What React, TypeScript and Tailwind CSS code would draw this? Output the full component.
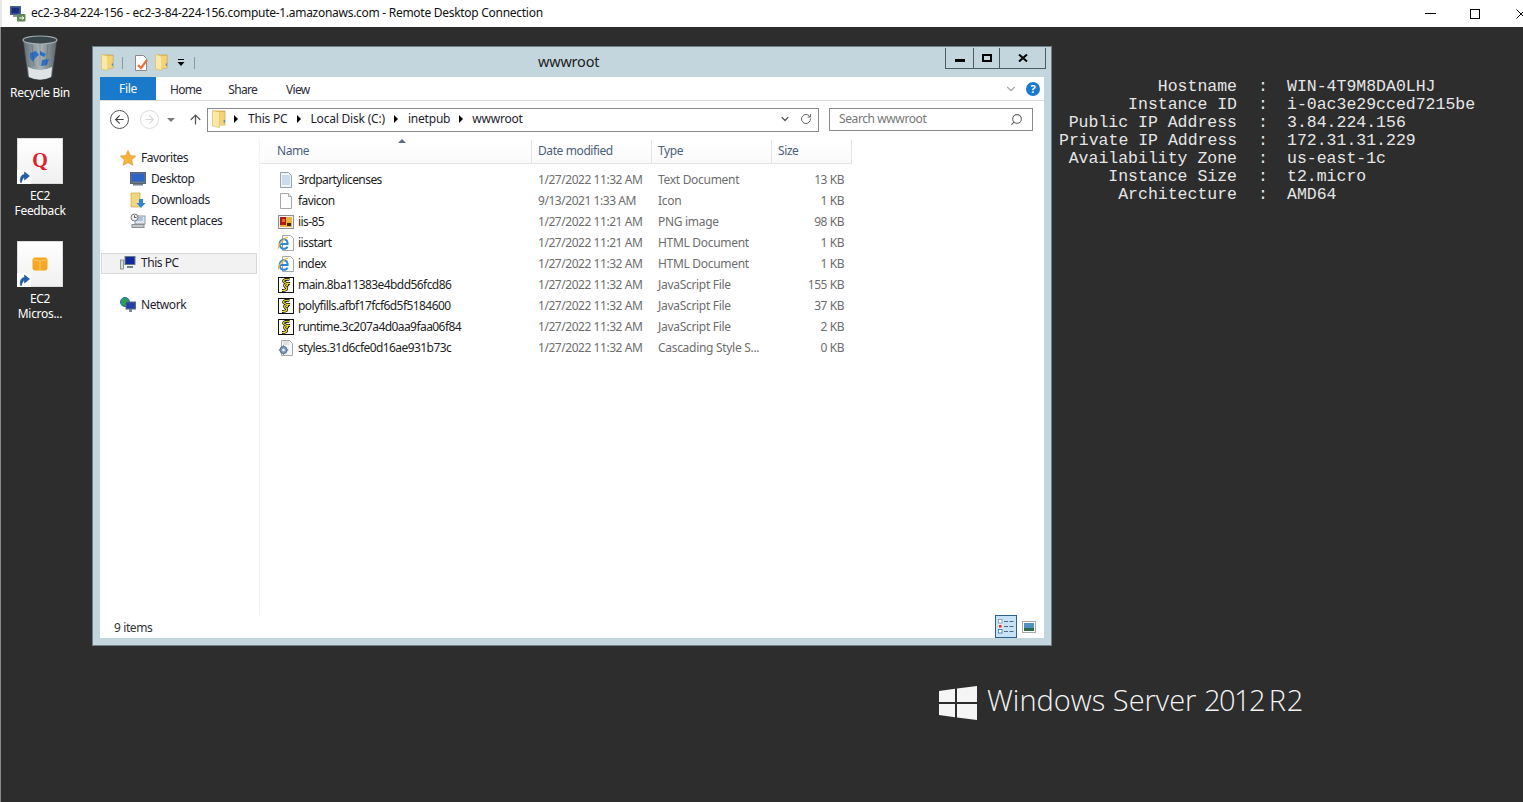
import { ArrowLeft, ArrowRight, ArrowUp, ChevronDown, RotateCw, Search } from 'lucide-react';
import type { ReactNode } from 'react';

type FileKind = 'text' | 'blank' | 'png' | 'ie' | 'js' | 'css';

interface FileRow {
  name: string;
  date: string;
  type: string;
  size: string;
  kind: FileKind;
}

const files: FileRow[] = [
  { name: '3rdpartylicenses', date: '1/27/2022 11:32 AM', type: 'Text Document', size: '13 KB', kind: 'text' },
  { name: 'favicon', date: '9/13/2021 1:33 AM', type: 'Icon', size: '1 KB', kind: 'blank' },
  { name: 'iis-85', date: '1/27/2022 11:21 AM', type: 'PNG image', size: '98 KB', kind: 'png' },
  { name: 'iisstart', date: '1/27/2022 11:21 AM', type: 'HTML Document', size: '1 KB', kind: 'ie' },
  { name: 'index', date: '1/27/2022 11:32 AM', type: 'HTML Document', size: '1 KB', kind: 'ie' },
  { name: 'main.8ba11383e4bdd56fcd86', date: '1/27/2022 11:32 AM', type: 'JavaScript File', size: '155 KB', kind: 'js' },
  { name: 'polyfills.afbf17fcf6d5f5184600', date: '1/27/2022 11:32 AM', type: 'JavaScript File', size: '37 KB', kind: 'js' },
  { name: 'runtime.3c207a4d0aa9faa06f84', date: '1/27/2022 11:32 AM', type: 'JavaScript File', size: '2 KB', kind: 'js' },
  { name: 'styles.31d6cfe0d16ae931b73c', date: '1/27/2022 11:32 AM', type: 'Cascading Style S...', size: '0 KB', kind: 'css' },
];

const instanceInfo = [
  ['Hostname', 'WIN-4T9M8DA0LHJ'],
  ['Instance ID', 'i-0ac3e29cced7215be'],
  ['Public IP Address', '3.84.224.156'],
  ['Private IP Address', '172.31.31.229'],
  ['Availability Zone', 'us-east-1c'],
  ['Instance Size', 't2.micro'],
  ['Architecture', 'AMD64'],
];

function FolderIcon({ className = 'w-[14px] h-[18px]' }: { className?: string }) {
  return (
    <svg viewBox="0 0 14 18" className={className}>
      <path d="M2 1h11v14H2z" fill="#edc45c" stroke="#c99b35" strokeWidth="0.7" />
      <path d="M0.5 0.5l7 1.5v15.5l-7-1.5z" fill="#f9e9a4" stroke="#dcbb62" strokeWidth="0.7" />
      <path d="M7.5 2h5v13h-5z" fill="#f4d27a" />
      <rect x="11.6" y="10" width="1.4" height="2.5" fill="#4a90d9" />
    </svg>
  );
}

function RdpIcon() {
  return (
    <svg viewBox="0 0 16 16" className="w-[16px] h-[16px]">
      <rect x="0.5" y="0.5" width="10" height="8" fill="#2a4fa8" stroke="#566" />
      <rect x="2" y="2" width="7" height="5" fill="#1a2f7c" />
      <rect x="3" y="9" width="5" height="2" fill="#8a96a8" />
      <rect x="7" y="8" width="8.5" height="7.5" rx="1" fill="#5f8a55" />
      <path d="M9 12h5M12 10.5l2 1.5-2 1.5" stroke="#fff" strokeWidth="1" fill="none" />
    </svg>
  );
}

function RecycleBinIcon() {
  return (
    <svg viewBox="0 0 36 46" className="w-[36px] h-[46px]">
      <defs>
        <linearGradient id="binBody" x1="0" x2="1" y1="0" y2="0">
          <stop offset="0" stopColor="#5f6c72" />
          <stop offset="0.5" stopColor="#a9b4b8" />
          <stop offset="1" stopColor="#59666c" />
        </linearGradient>
      </defs>
      <path d="M1 5l5 37q12 6 24 0l5-37z" fill="url(#binBody)" stroke="#333b40" strokeWidth="0.6" />
      <path d="M6 32q12 6 24 0l-1 10q-11 5-22 0z" fill="#dfe3e5" />
      <ellipse cx="18" cy="5" rx="17" ry="4" fill="#39454b" stroke="#a3adb2" strokeWidth="1.2" />
      <path d="M8 18l6-2 3 4-4 3-2 4-3-4zM18 16l6 3-2 3-4-2zM20 25l7-1-2 6-6 1z" fill="#2f6fc4" />
      <path d="M10 9l2 22M26 9l-2 22M18 9v22" stroke="#2f3a40" strokeWidth="0.5" opacity="0.5" />
    </svg>
  );
}

function ShortcutBadge() {
  return (
    <span className="absolute -left-px -bottom-px w-[14px] h-[14px] bg-white flex items-center justify-center">
      <svg viewBox="0 0 12 12" className="w-[12px] h-[12px]">
        <path d="M2.5 11.5C1.5 6 4 3.5 6.5 3.5V1L11.5 5 6.5 9V6.5C5 6.5 4 8.5 3.5 11.5z" fill="#1f5fae" stroke="#123f7c" strokeWidth="0.5" />
      </svg>
    </span>
  );
}

function DesktopTile({ children }: { children: ReactNode }) {
  return (
    <div className="relative w-[46px] h-[46px] bg-gradient-to-b from-white to-[#f0f0f0] border border-[#dcdcdc] flex items-center justify-center">
      {children}
      <ShortcutBadge />
    </div>
  );
}

function FileIcon({ kind }: { kind: FileKind }) {
  if (kind === 'text') {
    return (
      <svg viewBox="0 0 16 16" className="w-[16px] h-[16px]">
        <path d="M2.5 0.5h8l3 3v12h-11z" fill="#eef5fb" stroke="#9aa4ac" />
        <path d="M4 4h8M4 6h8M4 8h8M4 10h8M4 12h8" stroke="#a8c4dc" strokeWidth="1" />
      </svg>
    );
  }
  if (kind === 'blank') {
    return (
      <svg viewBox="0 0 16 16" className="w-[16px] h-[16px]">
        <path d="M2.5 0.5h8l3 3v12h-11z" fill="#fdfdfd" stroke="#a8a8a8" />
        <path d="M10.5 0.5v3h3" fill="#eee" stroke="#a8a8a8" />
      </svg>
    );
  }
  if (kind === 'png') {
    return (
      <svg viewBox="0 0 16 16" className="w-[16px] h-[16px]">
        <rect x="0.5" y="1.5" width="15" height="13" fill="#f2f2f2" stroke="#8e8e8e" />
        <rect x="2" y="3" width="12" height="10" fill="#e9b23a" />
        <rect x="2" y="3" width="6" height="8" fill="#a81e12" />
        <rect x="9" y="9" width="4" height="3" fill="#3a2a0a" />
        <rect x="4" y="5" width="3" height="3" fill="#e8702a" />
      </svg>
    );
  }
  if (kind === 'ie') {
    return (
      <svg viewBox="0 0 16 16" className="w-[16px] h-[16px]">
        <path d="M4.5 0.5h8l3 3v12h-11z" fill="#fff" stroke="#a8a8a8" />
        <path d="M2.2 9h7.4C9.8 6 8 4.2 5.8 4.2S1.6 6.2 1.6 9s2 4.8 4.3 4.8c1.6 0 3-.8 3.6-2.2" fill="none" stroke="#2a86d8" strokeWidth="2" />
        <path d="M0 14C.5 9 5 3.5 10 2" fill="none" stroke="#f0b429" strokeWidth="1.2" />
      </svg>
    );
  }
  if (kind === 'js') {
    return (
      <svg viewBox="0 0 16 16" className="w-[16px] h-[16px]">
        <rect x="0.5" y="0.5" width="15" height="15" fill="#fafafa" stroke="#111" />
        <path d="M11.5 2.5C7 1.5 3.5 4 7 5.5s3.5 2.5 1 3.5M12 6.5C8 6 5 8 7.5 10s1 3.5-3.5 3.5" fill="none" stroke="#111" strokeWidth="2.8" />
        <path d="M11.5 2.5C7 1.5 3.5 4 7 5.5s3.5 2.5 1 3.5M12 6.5C8 6 5 8 7.5 10s1 3.5-3.5 3.5" fill="none" stroke="#f2dc2c" strokeWidth="1.2" />
      </svg>
    );
  }
  return (
    <svg viewBox="0 0 16 16" className="w-[16px] h-[16px]">
      <path d="M3.5 0.5h8l3 3v12h-11z" fill="#f5f7f9" stroke="#a8a8a8" />
      <path d="M5 2h6M5 4h6" stroke="#c6cdd4" />
      <circle cx="5.5" cy="10" r="3.6" fill="#7e9cc0" stroke="#5a6f88" />
      <circle cx="5.5" cy="10" r="1.3" fill="#f5f7f9" />
      <path d="M5.5 5.2v1.5M5.5 13.3v1.5M0.7 10h1.5M8.8 10h1.5" stroke="#5a6f88" strokeWidth="1.2" />
    </svg>
  );
}

function NavRow({ icon, label, indent }: { icon: ReactNode; label: string; indent?: boolean }) {
  return (
    <div className={`h-[21px] pb-[2px] flex items-center gap-[5px] text-[#1e1e30] tracking-[-0.45px] ${indent ? 'pl-[30px]' : 'pl-[20px]'}`}>
      <span className="w-[16px] h-[16px] flex items-center justify-center">{icon}</span>
      <span>{label}</span>
    </div>
  );
}

function Monitor() {
  return (
    <svg viewBox="0 0 16 16" className="w-[16px] h-[16px]">
      <rect x="0.5" y="1.5" width="15" height="11" fill="#6c7a88" stroke="#5a6470" />
      <rect x="1.5" y="2.5" width="13" height="8" fill="#2f63c6" />
      <rect x="3" y="13" width="10" height="1.5" fill="#70808e" />
    </svg>
  );
}

function BreadcrumbArrow({ className }: { className: string }) {
  return <span className={`w-0 h-0 border-y-[4px] border-y-transparent border-l-[4px] border-l-black ${className}`} />;
}

export default function App() {
  return (
    <div className="w-[1523px] h-[802px] overflow-hidden flex flex-col bg-[#2d2d2d] font-['Noto_Sans','Open_Sans',sans-serif] text-[12px]">
      {/* remote desktop title bar */}
      <div className="h-[27px] shrink-0 bg-white flex items-center pl-[8px] text-[#111] border-l-2 border-[#e8e8e8]">
        <RdpIcon />
        <span className="ml-[5px] tracking-[-0.28px] pb-[1px]">ec2-3-84-224-156 - ec2-3-84-224-156.compute-1.amazonaws.com - Remote Desktop Connection</span>
        <div className="ml-auto flex items-center">
          <span className="w-[11px] h-[1px] bg-black" />
          <span className="ml-[34px] w-[10px] h-[10px] border border-black" />
          <svg viewBox="0 0 10 10" className="ml-[36px] w-[10px] h-[10px] -mr-[3px]">
            <path d="M0.5 0.5l9 9M9.5 0.5l-9 9" stroke="#000" strokeWidth="1" />
          </svg>
        </div>
      </div>

      <div className="flex-1 flex flex-col border-l border-[#8a8a8a]">
        {/* desktop */}
        <div className="flex items-start h-[619px] shrink-0">
          <div className="w-[91px] shrink-0 flex flex-col">
            <div className="w-[78px] flex flex-col items-center pt-[8px] text-white leading-[15px] tracking-[-0.3px]">
              <RecycleBinIcon />
              <span className="mt-[4px] whitespace-nowrap">Recycle Bin</span>
              <div className="mt-[38px]">
                <DesktopTile>
                  <span className="font-['Liberation_Serif',serif] font-bold text-[20px] text-[#e0202c] mb-[2px]">Q</span>
                </DesktopTile>
              </div>
              <span className="mt-[4px] text-center">EC2<br />Feedback</span>
              <div className="mt-[23px]">
                <DesktopTile>
                  <svg viewBox="0 0 16 16" className="w-[16px] h-[16px] mb-[1px]">
                    <path d="M2 1.5h12l1.5 2v9l-1.5 2H2l-1.5-2v-9z" fill="#f5a623" />
                    <path d="M8 5v10M.5 3.5L8 5l7.5-1.5" stroke="#ffd27a" strokeWidth="0.8" fill="none" />
                  </svg>
                </DesktopTile>
              </div>
              <span className="mt-[4px] text-center">EC2<br />Micros...</span>
            </div>
          </div>

          {/* explorer window */}
          <div className="mt-[19px] w-[960px] h-[600px] shrink-0 bg-[#c3d6dd] border border-[#6f8087] flex flex-col px-[7px] pb-[7px]">
            <div className="h-[29px] mt-[1px] shrink-0 flex items-start">
              <div className="w-[438px] h-full flex items-center gap-[5px] pl-[1px]">
                <FolderIcon className="w-[13px] h-[17px]" />
                <span className="w-[1px] h-[12px] bg-[#8a9aa0] ml-[3px]" />
                <svg viewBox="0 0 16 16" className="w-[16px] h-[16px] ml-[5px]">
                  <path d="M2.5 0.5h8l3 3v12h-11z" fill="#fff" stroke="#8a8a8a" />
                  <path d="M5 10l3 3 6-8" stroke="#e8703a" strokeWidth="2.2" fill="none" />
                </svg>
                <FolderIcon className="w-[13px] h-[17px] ml-[1px]" />
                <svg viewBox="0 0 8 8" className="w-[8px] h-[8px] ml-[4px]">
                  <path d="M1 0.5h6" stroke="#000" strokeWidth="1" />
                  <path d="M0.5 3h7L4 7z" fill="#000" />
                </svg>
                <span className="w-[1px] h-[12px] bg-[#8a9aa0] ml-[4px]" />
              </div>
              <span className="h-full flex items-center text-[14.5px] text-[#222] tracking-[-0.2px] pb-[1px]">wwwroot</span>
              {/* caption buttons */}
              <div className="ml-auto -mr-[2px] h-[21px] flex border border-t-0 border-[#4d5c63] text-black">
                <div className="w-[28px] flex items-center justify-center border-r border-[#4d5c63]">
                  <span className="w-[10px] h-[3px] bg-black mt-[4px]" />
                </div>
                <div className="w-[26px] flex items-center justify-center border-r border-[#4d5c63]">
                  <span className="w-[10px] h-[8px] border-2 border-black" />
                </div>
                <div className="w-[45px] flex items-center justify-center">
                  <svg viewBox="0 0 10 8" className="w-[10px] h-[8px]">
                    <path d="M1 0.5l8 7M9 0.5l-8 7" stroke="#000" strokeWidth="2" />
                  </svg>
                </div>
              </div>
            </div>

            <div className="flex-1 bg-white flex flex-col min-h-0">
              {/* ribbon tabs */}
              <div className="h-[24px] shrink-0 flex items-stretch border-b border-[#dadbdc] text-[#2b2b3a] tracking-[-0.7px]">
                <div className="w-[56px] bg-[#1979ca] text-white flex items-center justify-center pt-[1px] tracking-[-0.3px]">File</div>
                <span className="ml-[14px] self-center pt-[2px]">Home</span>
                <span className="ml-[27px] self-center pt-[2px]">Share</span>
                <span className="ml-[29px] self-center pt-[2px]">View</span>
                <div className="ml-auto self-center flex items-center pr-[4px] gap-[8px]">
                  <ChevronDown size={14} strokeWidth={2} className="text-[#a9a9a9]" />
                  <span className="w-[14px] h-[14px] rounded-full bg-[#1979ca] text-white font-bold text-[11px] leading-[14px] text-center tracking-normal">?</span>
                </div>
              </div>

              {/* address row */}
              <div className="h-[37px] shrink-0 flex items-center">
                <span className="ml-[10px] w-[19px] h-[19px] rounded-full border border-[#555] flex items-center justify-center text-[#444]">
                  <ArrowLeft size={13} strokeWidth={2} />
                </span>
                <span className="ml-[11px] w-[19px] h-[19px] rounded-full border border-[#dcdcdc] flex items-center justify-center text-[#d8d8d8]">
                  <ArrowRight size={13} strokeWidth={2} />
                </span>
                <span className="ml-[8px] w-0 h-0 border-x-[4px] border-x-transparent border-t-[4px] border-t-[#7a7a7a]" />
                <ArrowUp size={15} strokeWidth={2} className="ml-[13px] text-[#555]" />
                <div className="ml-[4px] w-[612px] h-[24px] pb-[1px] border border-[#8a8a8a] flex items-center pl-[4px] text-[#1e1e30] tracking-[-0.2px]">
                  <FolderIcon className="w-[14px] h-[18px]" />
                  <BreadcrumbArrow className="ml-[8px]" />
                  <span className="ml-[10px]">This PC</span>
                  <BreadcrumbArrow className="ml-[9px]" />
                  <span className="ml-[10px]">Local Disk (C:)</span>
                  <BreadcrumbArrow className="ml-[9px]" />
                  <span className="ml-[10px]">inetpub</span>
                  <BreadcrumbArrow className="ml-[9px]" />
                  <span className="ml-[9px]">wwwroot</span>
                  <ChevronDown size={12} strokeWidth={2.4} className="ml-auto text-[#555]" />
                  <RotateCw size={12} strokeWidth={2} className="ml-[9px] mr-[6px] text-[#666]" />
                </div>
                <div className="ml-[10px] w-[204px] h-[23px] pb-[1px] border border-[#8a8a8a] flex items-center pl-[9px] pr-[9px] text-[#777] tracking-[-0.4px]">
                  <span>Search wwwroot</span>
                  <Search size={13} strokeWidth={2} className="ml-auto text-[#666] -scale-x-100" />
                </div>
              </div>

              {/* nav pane + file list */}
              <div className="flex-1 flex min-h-0">
                <div className="w-[160px] shrink-0 pt-[10px] border-r border-[#f4f4f4]">
                  <NavRow
                    label="Favorites"
                    icon={
                      <svg viewBox="0 0 16 16" className="w-[16px] h-[16px]">
                        <path d="M8 0.5l2.3 5 5.4.6-4 3.7 1.1 5.4L8 12.5l-4.8 2.7 1.1-5.4-4-3.7 5.4-.6z" fill="#f7b23b" stroke="#d98a2b" strokeWidth="0.6" />
                      </svg>
                    }
                  />
                  <NavRow indent label="Desktop" icon={<Monitor />} />
                  <NavRow
                    indent
                    label="Downloads"
                    icon={
                      <svg viewBox="0 0 16 16" className="w-[16px] h-[16px]">
                        <path d="M1 1h9v14H1z" fill="#f2d77f" stroke="#c9a64a" strokeWidth="0.7" />
                        <path d="M9 7h4v4h2.5L11 16l-4.5-5H9z" fill="#2f86d8" />
                      </svg>
                    }
                  />
                  <NavRow
                    indent
                    label="Recent places"
                    icon={
                      <svg viewBox="0 0 16 16" className="w-[16px] h-[16px]">
                        <rect x="5" y="3" width="10" height="8" fill="#dfe6ee" stroke="#8d99a5" />
                        <path d="M7 5h6M7 7h6" stroke="#7aa0cc" />
                        <circle cx="4.5" cy="4.5" r="3.5" fill="#eee" stroke="#777" />
                        <path d="M4.5 2.5v2h2" stroke="#555" fill="none" />
                        <rect x="2" y="11.5" width="12" height="3" fill="#c4c8cc" stroke="#8a8f94" />
                      </svg>
                    }
                  />
                  <div className="mt-[21px] ml-[1px] w-[156px] h-[21px] pb-[1px] bg-[#f2f2f2] border border-[#d9d9d9] flex items-center gap-[5px] pl-[18px] text-[#1e1e30] tracking-[-0.45px]">
                    <svg viewBox="0 0 16 16" className="w-[16px] h-[16px]">
                      <rect x="0.5" y="5" width="3" height="9" fill="#d8dcdc" stroke="#6a7a6a" strokeWidth="0.7" />
                      <rect x="4.5" y="1" width="11" height="9" fill="#6c7a88" />
                      <rect x="5.5" y="2" width="9" height="7" fill="#12289c" />
                      <rect x="7" y="11" width="6" height="2" fill="#70808e" />
                    </svg>
                    <span>This PC</span>
                  </div>
                  <div className="mt-[21px]">
                    <NavRow
                      label="Network"
                      icon={
                        <svg viewBox="0 0 16 16" className="w-[16px] h-[16px]">
                          <circle cx="5" cy="5" r="4.5" fill="#2f9e5a" stroke="#1e6fb0" />
                          <rect x="6" y="5" width="9.5" height="7" fill="#2340a8" stroke="#5b6878" />
                          <rect x="9" y="12" width="3" height="3" fill="#7a8894" />
                        </svg>
                      }
                    />
                  </div>
                </div>

                <div className="flex-1 min-w-0 flex flex-col">
                  <div className="relative mt-[2px] w-[592px] h-[24px] grid grid-cols-[272px_120px_120px_80px] bg-gradient-to-b from-white to-[#fafafa] border-b border-[#e5e5e5] text-[#4c607a] tracking-[-0.4px]">
                    <span className="absolute left-[138px] -top-[1px] w-0 h-0 border-x-[4px] border-x-transparent border-b-[4px] border-b-[#5c6f85]" />
                    <span className="pl-[17px] leading-[22px] border-r border-[#e5e5e5]">Name</span>
                    <span className="pl-[6px] leading-[22px] border-r border-[#e5e5e5]">Date modified</span>
                    <span className="pl-[6px] leading-[22px] border-r border-[#e5e5e5]">Type</span>
                    <span className="pl-[6px] leading-[22px] border-r border-[#e5e5e5]">Size</span>
                  </div>
                  <div className="mt-[6px] flex flex-col w-[592px]">
                    {files.map((file) => (
                      <div key={file.name} className="h-[21px] pb-[2px] grid grid-cols-[271px_120px_120px_81px] items-center text-[#6d6d6d] tracking-[-0.45px]">
                        <div className="flex items-center gap-[4px] pl-[18px] text-[#1e1e1e] tracking-[-0.57px]">
                          <FileIcon kind={file.kind} />
                          <span>{file.name}</span>
                        </div>
                        <span className="pl-[7px]">{file.date}</span>
                        <span className="pl-[7px] tracking-[-0.3px]">{file.type}</span>
                        <span className="pr-[8px] text-right">{file.size}</span>
                      </div>
                    ))}
                  </div>
                </div>
              </div>

              {/* status bar */}
              <div className="h-[23px] shrink-0 flex items-center pl-[14px] text-[#333] tracking-[-0.4px]">
                <span className="mt-[2px]">9 items</span>
                <div className="ml-auto mr-[8px] flex items-center gap-[5px]">
                  <span className="w-[22px] h-[23px] bg-[#c6e2f7] border border-[#2c628b] flex items-center justify-center">
                    <svg viewBox="0 0 16 15" className="w-[16px] h-[15px]">
                      <rect x="0.5" y="0.5" width="3.5" height="3.5" fill="#fff" stroke="#7a8a9a" strokeWidth="0.7" />
                      <rect x="0.5" y="5.5" width="3.5" height="3.5" fill="#e0303a" stroke="#fff" strokeWidth="0.7" />
                      <rect x="0.5" y="10.5" width="3.5" height="3.5" fill="#fff" stroke="#2c628b" strokeWidth="0.7" />
                      <path d="M6 2.5h4M11.5 2.5h4M6 7.5h4M11.5 7.5h4M6 12.5h4M11.5 12.5h4" stroke="#5a6478" strokeWidth="1" />
                    </svg>
                  </span>
                  <svg viewBox="0 0 14 12" className="w-[14px] h-[12px]">
                    <rect x="0.5" y="0.5" width="13" height="11" fill="#fff" stroke="#a9a9a9" />
                    <rect x="2" y="2" width="10" height="8" fill="#4f93c4" />
                    <rect x="2" y="7" width="10" height="3" fill="#2d6b4a" />
                  </svg>
                </div>
              </div>
            </div>
          </div>

          {/* instance details */}
          <div className="ml-[7px] mt-[51px] font-['Liberation_Mono',monospace] text-[16.5px] leading-[18px] text-[#e6e6e6] grid grid-cols-[178px_50px_auto]">
            {instanceInfo.map(([label, value]) => (
              <div key={label} className="contents">
                <span className="text-right whitespace-nowrap">{label}</span>
                <span className="pl-[21px]">:</span>
                <span className="whitespace-nowrap">{value}</span>
              </div>
            ))}
          </div>
        </div>

        {/* server branding */}
        <div className="pl-[938px] pt-[37px] flex items-center text-[#f4f4f4]">
          <svg viewBox="0 0 38 34" className="w-[38px] h-[34px]">
            <path d="M0 5l16-2.2V16H0zM18 2.5L38 0v16H18zM0 18h16v13.2L0 29zM18 18h20v16l-20-2.5z" fill="#f5f5f5" />
          </svg>
          <span className="ml-[10px] pb-[5px] font-['Open_Sans',sans-serif] font-light text-[29px] leading-[34px] whitespace-nowrap">
            Windows Server <span className="tracking-[-1.5px]">2012</span> <span className="-ml-[3px] tracking-[0.8px]">R2</span>
          </span>
        </div>
      </div>
    </div>
  );
}
